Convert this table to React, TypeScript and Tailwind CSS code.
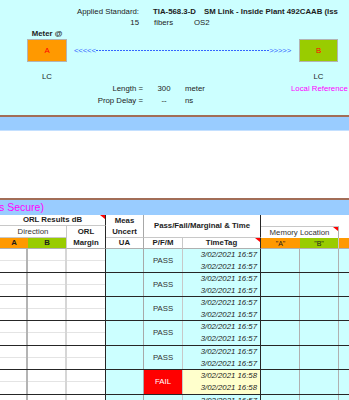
import React from "react";

function Tri() {
  return (
    <div className="absolute top-0 right-0 w-[5px] h-[4px] bg-[#ff0000] [clip-path:polygon(0_0,100%_0,100%_100%)]" />
  );
}

type Group = { h: number; res: "PASS" | "FAIL"; t: string; yellow?: boolean };

const groups: Group[] = [
  { h: 24, res: "PASS", t: "3/02/2021 16:57" },
  { h: 24, res: "PASS", t: "3/02/2021 16:57" },
  { h: 24, res: "PASS", t: "3/02/2021 16:57" },
  { h: 25, res: "PASS", t: "3/02/2021 16:57" },
  { h: 24, res: "PASS", t: "3/02/2021 16:57" },
  { h: 25, res: "FAIL", t: "3/02/2021 16:58", yellow: true },
  { h: 24, res: "PASS", t: "3/02/2021 16:57" },
];

function SplitCell({ w, border }: { w: string; border: string }) {
  return (
    <div className={`${w} ${border} shrink-0 h-full flex flex-col bg-white border-r`}>
      <div className="h-[12px] border-b border-b-[#e4e4e4]" />
      <div className="flex-1" />
    </div>
  );
}

function DataGroup({ g }: { g: Group }) {
  const hClass = g.h === 25 ? "h-[25px]" : "h-[24px]";
  return (
    <div className={`${hClass} flex border-b border-b-[#262626] w-[378px]`}>
      <SplitCell w="w-[28px]" border="border-r-2 border-r-[#b4b4b4]" />
      <SplitCell w="w-[39px]" border="border-r-2 border-r-[#d6d6d6]" />
      <SplitCell w="w-[39px]" border="border-r border-r-[#262626]" />
      <div className="w-[38px] shrink-0 h-full bg-[#ccffff] border-r border-r-[#a8a8a8]" />
      {g.res === "PASS" ? (
        <div className="w-[39px] shrink-0 h-full bg-[#ccffff] border-r border-r-[#c8c8c8] flex items-center justify-center text-[#333]">
          PASS
        </div>
      ) : (
        <div className="w-[39px] shrink-0 h-full bg-[#ff0000] border-r border-r-[#c8c8c8] flex items-center justify-center text-white">
          FAIL
        </div>
      )}
      <div
        className={`w-[78px] shrink-0 h-full ${g.yellow ? "bg-[#ffffcc]" : "bg-[#ccffff]"} border-r border-r-[#262626] flex flex-col italic text-right pr-[3px]`}
      >
        <div className="h-[12px] flex items-center justify-end">{g.t}</div>
        <div className="flex-1 flex items-center justify-end">{g.t}</div>
      </div>
      <div className="w-[39px] shrink-0 h-full bg-[#ccffff] border-r border-r-[#b0b0b0]" />
      <div className="w-[39px] shrink-0 h-full bg-[#ccffff] border-r border-r-[#b0b0b0]" />
      <div className="w-[39px] shrink-0 h-full bg-[#ccffff]" />
    </div>
  );
}

export default function App() {
  return (
    <div className="w-[349px] h-[400px] overflow-hidden bg-white font-['Liberation_Sans',Arial,sans-serif] text-[7.8px] leading-none text-[#1c1c1c]">
      {/* Top cyan section */}
      <div className="h-[115px] bg-[#ccffff] flex flex-col whitespace-nowrap">
        <div className="mt-[6px] h-[12px] flex items-center">
          <div className="w-[139px] shrink-0 text-right">Applied Standard:</div>
          <div className="ml-[14px] w-[51px] shrink-0 font-bold">TIA-568.3-D</div>
          <div className="shrink-0 font-bold">SM Link - Inside Plant 492CAAB (Iss</div>
        </div>
        <div className="h-[10px] flex items-center">
          <div className="w-[139px] shrink-0 text-right">15</div>
          <div className="ml-[15px] w-[40px] shrink-0">fibers</div>
          <div className="shrink-0">OS2</div>
        </div>
        <div className="h-[11px] flex items-center">
          <div className="ml-[27px] w-[40px] shrink-0 text-center font-bold">Meter @</div>
        </div>
        <div className="h-[23px] flex items-center">
          <div className="ml-[27px] w-[40px] h-[23px] shrink-0 bg-[#ff9900] border border-[#b3b3b3] flex items-center justify-center text-[#ff0000]">
            A
          </div>
          <div className="ml-[7px] w-[217px] shrink-0 flex items-center text-[#3366ff]">
            <span className="tracking-[-0.2px]">&lt;&lt;&lt;&lt;&lt;</span>
            <div className="flex-1 h-px bg-[repeating-linear-gradient(90deg,#3366ff_0_2px,transparent_2px_3px)]" />
            <span className="tracking-[-0.2px]">&gt;&gt;&gt;&gt;&gt;</span>
          </div>
          <div className="ml-[8px] w-[39px] h-[23px] shrink-0 bg-[#99cc00] border border-[#b3b3b3] flex items-center justify-center text-[#ff0000]">
            B
          </div>
        </div>
        <div className="mt-[9px] h-[12px] flex items-center">
          <div className="ml-[27px] w-[40px] shrink-0 text-center">LC</div>
          <div className="ml-[232px] w-[39px] shrink-0 text-center">LC</div>
        </div>
        <div className="h-[12px] flex items-center">
          <div className="w-[143px] shrink-0 text-right">Length =</div>
          <div className="w-[42px] shrink-0 text-center">300</div>
          <div className="w-[106px] shrink-0">meter</div>
          <div className="shrink-0 text-[#ff00ff]">Local Reference</div>
        </div>
        <div className="h-[11px] flex items-center">
          <div className="w-[143px] shrink-0 text-right">Prop Delay =</div>
          <div className="w-[42px] shrink-0 text-center">--</div>
          <div className="shrink-0">ns</div>
        </div>
      </div>

      {/* Bands */}
      <div className="h-[2px] bg-[#a26d57]" />
      <div className="h-[14px] bg-[#99ccff] border-b border-b-[#c4e0ff]" />
      <div className="h-[67px] bg-white" />
      <div className="h-[2px] bg-[#a26d57]" />
      <div className="h-[15px] bg-[#99ccff] flex items-center overflow-hidden whitespace-nowrap">
        <span className="ml-[-1px] text-[10.5px] text-[#ff00ff]">s Secure)</span>
      </div>

      {/* Table header */}
      <div className="grid grid-cols-[28px_39px_39px_38px_39px_78px_39px_39px_39px] grid-rows-[11px_12px_11px] w-[378px] bg-white">
        <div className="col-start-1 col-span-3 row-start-1 relative flex items-center justify-center font-bold border-b border-b-[#c8c8c8] border-r border-r-[#262626]">
          ORL Results dB
          <Tri />
        </div>
        <div className="col-start-1 col-span-2 row-start-2 flex items-center justify-center border-b border-b-[#c8c8c8] border-r border-r-[#c8c8c8] text-[#333]">
          Direction
        </div>
        <div className="col-start-3 row-start-2 row-span-2 flex flex-col items-center justify-center font-bold leading-[11px] border-r border-r-[#262626] border-b border-b-[#b0b0b0]">
          <span>ORL</span>
          <span>Margin</span>
        </div>
        <div className="col-start-1 row-start-3 flex items-center justify-center font-bold bg-[#ff9900] border-b border-b-[#b0b0b0]">
          A
        </div>
        <div className="col-start-2 row-start-3 flex items-center justify-center font-bold bg-[#99cc00] border-b border-b-[#b0b0b0] border-r border-r-[#c8c8c8]">
          B
        </div>
        <div className="col-start-4 row-start-1 row-span-2 flex flex-col items-center justify-center font-bold leading-[11px] border-r border-r-[#a8a8a8] border-b border-b-[#c8c8c8]">
          <span>Meas</span>
          <span>Uncert</span>
        </div>
        <div className="col-start-4 row-start-3 flex items-center justify-center font-bold border-r border-r-[#a8a8a8] border-b border-b-[#b0b0b0]">
          UA
        </div>
        <div className="col-start-5 col-span-2 row-start-1 row-span-2 flex items-center justify-center font-bold border-r border-r-[#262626] border-b border-b-[#c8c8c8]">
          Pass/Fail/Marginal &amp; Time
        </div>
        <div className="col-start-5 row-start-3 flex items-center justify-center font-bold border-r border-r-[#c8c8c8] border-b border-b-[#b0b0b0]">
          P/F/M
        </div>
        <div className="col-start-6 row-start-3 relative flex items-center justify-center font-bold border-r border-r-[#262626] border-b border-b-[#b0b0b0]">
          TimeTag
          <Tri />
        </div>
        <div className="col-start-7 col-span-2 row-start-2 relative flex items-center justify-center text-[#333] border-t border-t-[#c8c8c8] border-r border-r-[#b0b0b0]">
          Memory Location
          <Tri />
        </div>
        <div className="col-start-7 row-start-3 flex items-center justify-center text-[7px] bg-[#ff9900] border-b border-b-[#b0b0b0]">
          &quot;A&quot;
        </div>
        <div className="col-start-8 row-start-3 flex items-center justify-center text-[7px] bg-[#99cc00] border-b border-b-[#b0b0b0] border-r border-r-[#c8c8c8]">
          &quot;B&quot;
        </div>
        <div className="col-start-9 row-start-3 bg-[#ff9900] border-b border-b-[#b0b0b0]" />
      </div>

      {/* Data rows */}
      {groups.map((g, i) => (
        <DataGroup key={i} g={g} />
      ))}
    </div>
  );
}
